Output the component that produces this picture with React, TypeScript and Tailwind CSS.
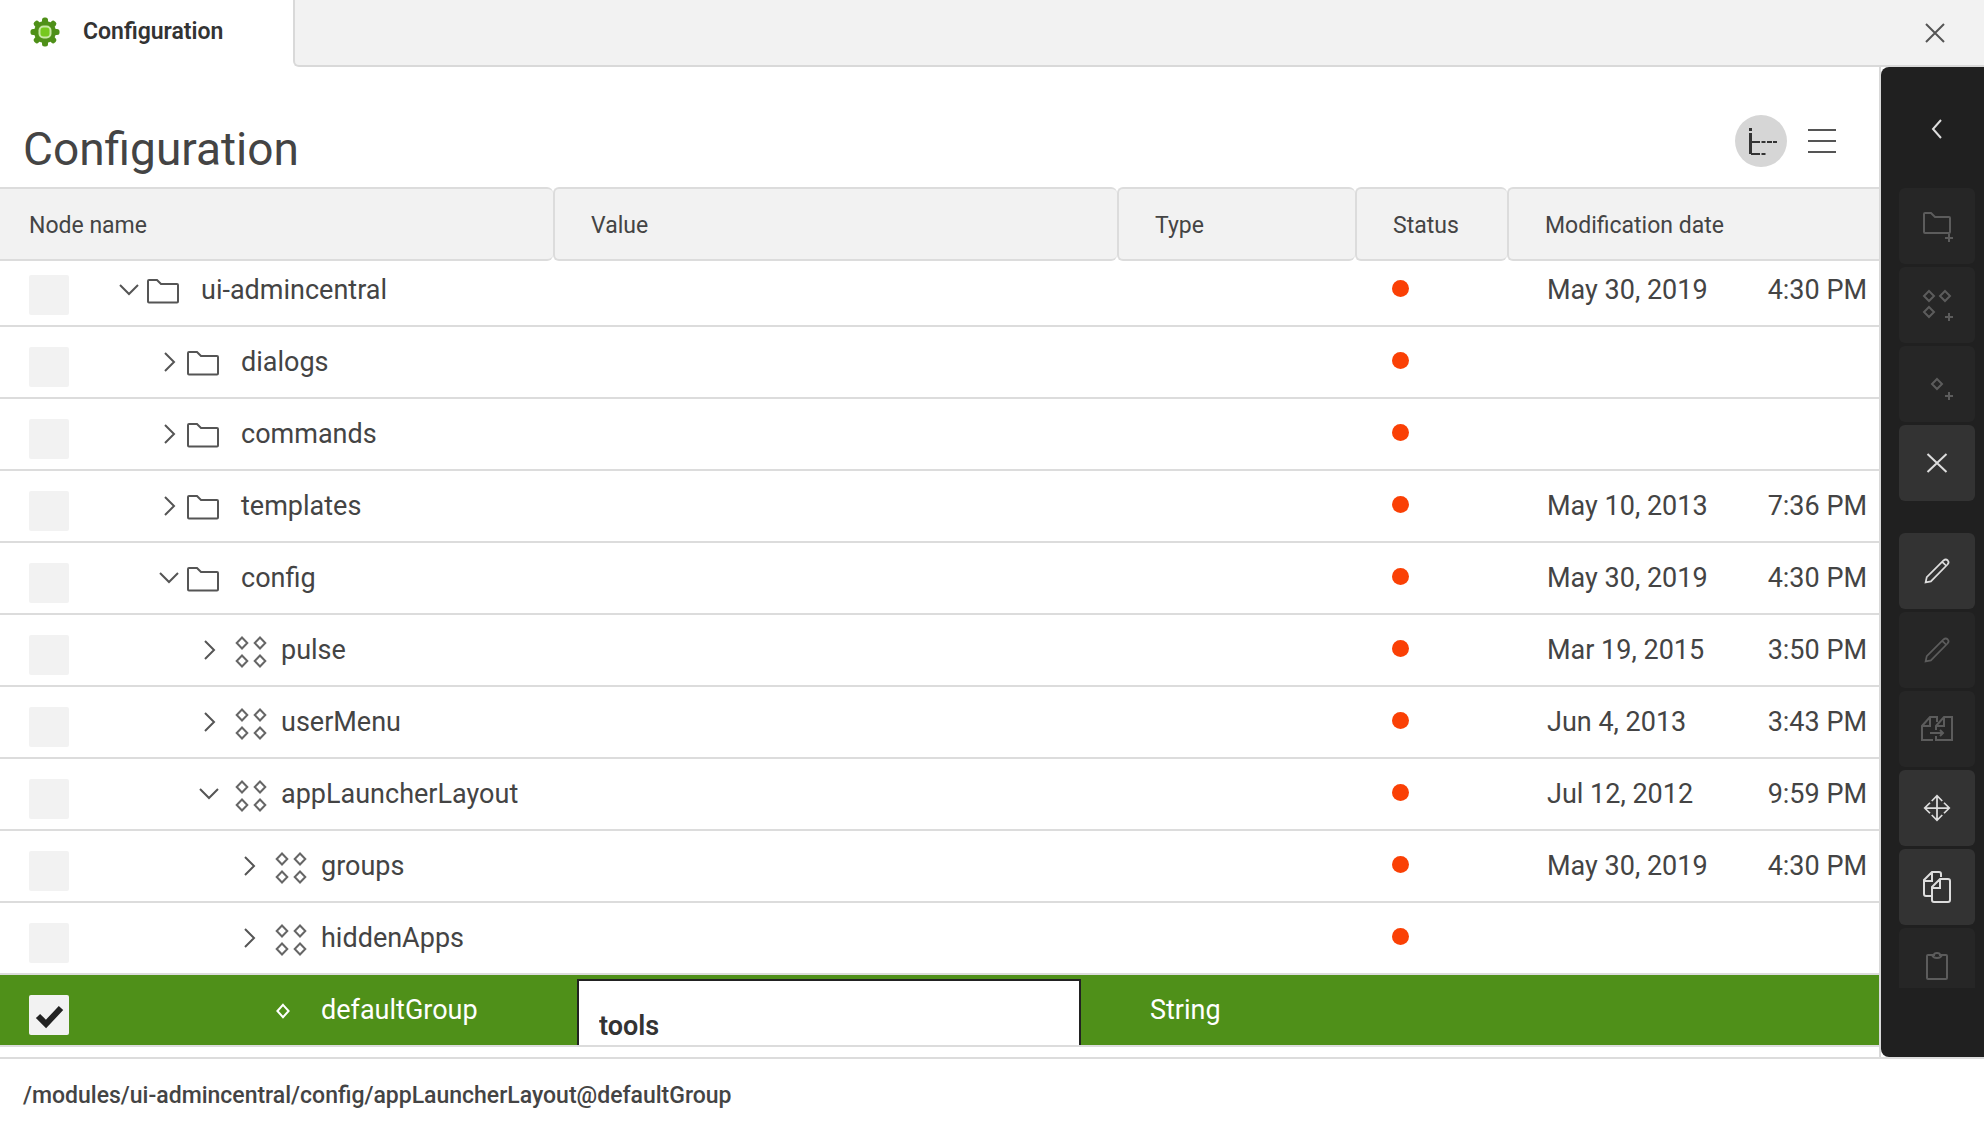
import React, { FC, ReactNode, useState } from 'react'

type NodeKind = 'folder' | 'content' | 'property'

interface ConfigNode {
  name: string,
  level: number,
  kind: NodeKind,
  open?: boolean,
  date?: string,
  time?: string,
  value?: string,
  type?: string
}

interface Action {
  label: string,
  icon: ReactNode,
  enabled?: boolean
}

const nodes: ConfigNode[] = [
  { name: 'ui-admincentral', level: 0, kind: 'folder', open: true, date: 'May 30, 2019', time: '4:30 PM' },
  { name: 'dialogs', level: 1, kind: 'folder' },
  { name: 'commands', level: 1, kind: 'folder' },
  { name: 'templates', level: 1, kind: 'folder', date: 'May 10, 2013', time: '7:36 PM' },
  { name: 'config', level: 1, kind: 'folder', open: true, date: 'May 30, 2019', time: '4:30 PM' },
  { name: 'pulse', level: 2, kind: 'content', date: 'Mar 19, 2015', time: '3:50 PM' },
  { name: 'userMenu', level: 2, kind: 'content', date: 'Jun 4, 2013', time: '3:43 PM' },
  { name: 'appLauncherLayout', level: 2, kind: 'content', open: true, date: 'Jul 12, 2012', time: '9:59 PM' },
  { name: 'groups', level: 3, kind: 'content', date: 'May 30, 2019', time: '4:30 PM' },
  { name: 'hiddenApps', level: 3, kind: 'content' },
  { name: 'defaultGroup', level: 3, kind: 'property', value: 'tools', type: 'String' },
]

const indents = ['pl-[50px]', 'pl-[90px]', 'pl-[130px]', 'pl-[170px]']

const iconSlots = {
  folder: 'pl-2 pt-0.5 text-[#555]',
  content: 'pl-4 pt-1 text-[#666]',
  property: 'pl-4 pt-0.5',
}

const Svg: FC<{ children: ReactNode, className?: string }> = ({ children, className = 'size-8' }) => (
  <svg viewBox="0 0 32 32" className={className} fill="none" stroke="currentColor" strokeWidth="2" aria-hidden="true">
    {children}
  </svg>
)

const GearIcon = () => (
  <svg viewBox="0 0 30 30" className="size-[30px]" aria-hidden="true">
    {[0, 45, 90, 135].map((angle) => (
      <rect key={angle} x="12" y="0.5" width="6" height="29" rx="2.5" fill="#4f9019" transform={`rotate(${angle} 15 15)`} />
    ))}
    <circle cx="15" cy="15" r="11" fill="#4f9019" />
    <rect x="8.5" y="8.5" width="13" height="13" rx="5" fill="#c9e8a5" />
    <rect x="10.500" y="10.500" width="9" height="9" rx="3" fill="#76c81e" />
  </svg>
)

const FolderIcon = () => (
  <Svg>
    <path d="M1 26.5V6Q1 5 2 5H10L14 9H30Q31 9 31 10V26.5Q31 27.5 30 27.5H2Q1 27.5 1 26.5Z" />
  </Svg>
)

const ContentIcon = () => (
  <Svg>
    <path d="M7 1.500L12.300 7L7 12.500L1.700 7Z M25 1.500L30.300 7L25 12.500L19.700 7Z M7 19.500L12.300 25L7 30.500L1.700 25Z M25 19.500L30.300 25L25 30.500L19.700 25Z" />
  </Svg>
)

const PropertyIcon = () => (
  <Svg>
    <path d="M8 9.800L13.600 16L8 22.200L2.400 16Z" />
  </Svg>
)

const plus = <path d="M28 24V32 M24 28H32" />

const pencil = (
  <Svg className="size-7">
    <path d="M3 29L4.300 23L23.500 4Q26 1.800 28.300 4Q30.300 6 28 8.600L9 27.800Z M22 5.500L26.500 10" />
  </Svg>
)

const actionGroups: Action[][] = [
  [
    {
      label: 'Add folder',
      icon: <Svg><path d="M3 22V4Q3 3 4 3H10L14 7H28Q29 7 29 8V22Q29 23 28 23H4Q3 23 3 22Z" />{plus}</Svg>
    },
    {
      label: 'Add content node',
      icon: <Svg><path d="M8 2L13 7L8 12L3 7Z M24 2L29 7L24 12L19 7Z M8 18L13 23L8 28L3 23Z" />{plus}</Svg>
    },
    { label: 'Add property', icon: <Svg><path d="M16 11L21 16L16 21L11 16Z" />{plus}</Svg> },
    { label: 'Delete', enabled: true, icon: <Svg><path d="M6.500 7L25.500 25 M25.500 7L6.500 25" /></Svg> },
  ],
  [
    { label: 'Edit property', enabled: true, icon: pencil },
    { label: 'Rename item', icon: pencil },
    {
      label: 'Duplicate item',
      icon: <Svg><path d="M12 27H1V13L9 4H16V9 M1 13H9V4 M15 17V13L23 4H31V27H15V23 M15 13H23V4 M9 20H22 M19 17L22 20L19 23" /></Svg>
    },
    {
      label: 'Move item',
      enabled: true,
      icon: <Svg className="size-7"><path d="M16 2V30 M2 16H30 M10 8L16 2L22 8 M10 24L16 30L22 24 M8 10L2 16L8 22 M24 10L30 16L24 22" /></Svg>
    },
    {
      label: 'Copy item',
      enabled: true,
      icon: <Svg><path d="M10 25H5Q3 25 3 23V9L11 1H18Q20 1 20 3V6 M3 10H11V1 M11 16L19 8H27Q29 8 29 10V29Q29 31 27 31H13Q11 31 11 29Z M11 17H19V8" /></Svg>
    },
    {
      label: 'Paste item',
      icon: <Svg><path d="M12 5H7Q6 5 6 6V28Q6 29 7 29H25Q26 29 26 28V6Q26 5 25 5H20 M11 5H13Q13 3 16 3Q19 3 19 5H21Q20 8 16 8Q12 8 11 5Z" /></Svg>
    },
  ],
]

const NodeIcon: FC<{ kind: NodeKind }> = ({ kind }) => {
  if (kind === 'folder') return <FolderIcon />
  if (kind === 'content') return <ContentIcon />
  return <PropertyIcon />
}

const Chevron: FC<{ open?: boolean }> = ({ open }) => (
  <svg viewBox="0 0 20 20" className="size-5" fill="none" stroke="currentColor" strokeWidth="2" aria-hidden="true">
    <path d={open ? 'M1 5L10 14L19 5' : 'M6 1L15 10L6 19'} />
  </svg>
)

const columns = ['Node name', 'Value', 'Type', 'Status', 'Modification date']

const NodeRow: FC<{ node: ConfigNode, first: boolean, checked: boolean, onCheck: () => void }> = ({ node, first, checked, onCheck }) => {
  const [value, setValue] = useState<string>(node.value ?? '')
  const cell = 'p-0 align-bottom'

  return (
    <tr className={`border-b-2 border-[#dcdcdc] ${first ? 'h-[65px]' : 'h-[72px]'} ${checked ? 'bg-[#4f9019] text-white' : ''}`}>
      <td className={cell}>
        <div className="mb-1.5 flex h-[58px] items-center pl-[29px]">
          <input
            type="checkbox"
            aria-label={`Select ${node.name}`}
            checked={checked}
            onChange={onCheck}
            className="peer mb-1 size-10 shrink-0 appearance-none self-end rounded-xs bg-[#f2f2f2]"
          />
          <svg viewBox="0 0 40 40" className="pointer-events-none invisible -ml-10 mb-1 size-10 shrink-0 self-end text-[#222] peer-checked:visible" fill="none" stroke="currentColor" strokeWidth="6" aria-hidden="true">
            <path d="M9 21L17 29L32 13" />
          </svg>
          <div className={`flex items-center ${indents[node.level]}`}>
            {node.kind === 'property' ? (
              <span className="w-5" />
            ) : (
              <button type="button" aria-label={`Toggle ${node.name}`} aria-expanded={!!node.open} className="text-[#555]">
                <Chevron open={node.open} />
              </button>
            )}
            <span className={`flex w-[62px] ${iconSlots[node.kind]}`}>
              <NodeIcon kind={node.kind} />
            </span>
            <span>{node.name}</span>
          </div>
        </div>
      </td>
      <td className={cell}>
        {node.value && (
          <div className="h-[66px] overflow-hidden pr-9 pl-6">
            <input
              type="text"
              aria-label={`Value of ${node.name}`}
              value={value}
              onChange={(e) => setValue(e.target.value)}
              className="h-[94px] w-full border-2 border-[#222] bg-white px-5 text-[27px] font-semibold text-[#333]"
            />
          </div>
        )}
      </td>
      <td className={cell}>
        <div className="mb-1.5 flex h-[58px] items-center pl-[33px]">{node.type}</div>
      </td>
      <td className={cell}>
        {!checked && (
          <div className="mb-1.5 flex h-[58px] items-center pl-[37px]">
            <span className="mb-1 size-[17px] rounded-full bg-[#fa4005]" role="img" aria-label="Unpublished" />
          </div>
        )}
      </td>
      <td className={cell}>
        <div className="mb-1.5 flex h-[58px] items-center justify-between pr-3 pl-10">
          <span>{node.date}</span>
          <span>{node.time}</span>
        </div>
      </td>
    </tr>
  )
}

const ActionBar = () => (
  <aside className="flex w-[103px] shrink-0 flex-col items-center rounded-l-lg bg-[#202020] pr-[9px] pl-[18px]">
    <button type="button" aria-label="Collapse action bar" className="mt-[46px] mb-[43px] text-[#ddd]">
      <svg viewBox="0 0 32 32" className="size-8" fill="none" stroke="currentColor" strokeWidth="2" aria-hidden="true">
        <path d="M20 7L12 16L20 25" />
      </svg>
    </button>
    <div className="flex flex-col gap-8">
      {actionGroups.map((group, i) => (
        <div key={i} className="flex flex-col gap-[3px]">
          {group.map((action) => (
            <button
              key={action.label}
              type="button"
              aria-label={action.label}
              disabled={!action.enabled}
              className={`flex w-[76px] items-center justify-center rounded-md ${action.label === 'Paste item' ? 'h-[60px] rounded-b-none pt-4' : 'h-[76px]'} ${action.enabled ? 'bg-[#333] text-[#ddd]' : 'bg-[#262626] text-[#5c5c5c]'}`}
            >
              {action.icon}
            </button>
          ))}
        </div>
      ))}
    </div>
  </aside>
)

const App = () => {
  const [selected, setSelected] = useState<string>('defaultGroup')

  return (
    <div className="flex min-h-screen flex-col bg-white font-[Roboto,'Liberation_Sans',sans-serif] text-[#444]">
      <header className="flex h-[67px]">
        <div className="flex w-[293px] shrink-0 items-center gap-[23px] pb-1 pl-[30px]">
          <GearIcon />
          <span className="pt-0.5 text-[23px] font-semibold text-[#333]">Configuration</span>
        </div>
        <div className="flex grow items-center justify-end rounded-bl-md border-b-2 border-l-2 border-[#d9d9d9] bg-[#f2f2f2] pr-[33px]">
          <button type="button" aria-label="Close" className="text-[#555]">
            <svg viewBox="0 0 32 32" className="size-8" fill="none" stroke="currentColor" strokeWidth="2" aria-hidden="true">
              <path d="M7 7L25 25 M25 7L7 25" />
            </svg>
          </button>
        </div>
      </header>

      <div className="flex border-b-2 border-[#dcdcdc]">
        <main className="grow border-r-2 border-[#d9d9d9] pb-2.5">
          <div className="flex h-[120px] items-start justify-between pr-[31px] pl-[23px]">
            <h1 className="mt-[52px] text-[46px] leading-[60px]">Configuration</h1>
            <div className="mt-12 flex gap-[9px]">
              <button type="button" aria-label="Tree view" className="flex size-[52px] items-center justify-center rounded-full bg-[#d6d6d6] text-[#333]">
                <svg viewBox="0 0 32 32" className="size-8" fill="none" stroke="currentColor" aria-hidden="true">
                  <path d="M5.500 3V6 M5.500 8V29" strokeWidth="3" />
                  <path d="M6 17H15 M16.500 17H20.500 M22 17H27 M28 17H32 M6 29H15 M16.500 29H20.500" strokeWidth="2" />
                </svg>
              </button>
              <button type="button" aria-label="List view" className="flex size-[52px] items-center justify-center text-[#555]">
                <svg viewBox="0 0 32 32" className="size-8" fill="none" stroke="currentColor" strokeWidth="2" aria-hidden="true">
                  <path d="M2 5H30 M2 16H30 M2 27H30" />
                </svg>
              </button>
            </div>
          </div>

          <table className="w-full table-fixed border-collapse text-[27px] leading-8">
            <colgroup>
              <col className="w-[553px]" />
              <col />
              <col className="w-[238px]" />
              <col className="w-[152px]" />
              <col className="w-[372px]" />
            </colgroup>
            <thead>
              <tr className="h-[74px]">
                {columns.map((column, i) => (
                  <th key={column} scope="col" className="p-0 text-left text-[23px] font-normal">
                    <div className={`flex h-[74px] items-center border-y-2 border-[#dcdcdc] bg-[#f2f2f2] pt-[3px] ${i === 0 ? 'pl-[29px]' : 'rounded-l-md border-l-2 pl-9'} ${i === 4 ? '' : 'rounded-r-md'}`}>
                      {column}
                    </div>
                  </th>
                ))}
              </tr>
            </thead>
            <tbody>
              {nodes.map((node, i) => (
                <NodeRow
                  key={node.name}
                  node={node}
                  first={i === 0}
                  checked={selected === node.name}
                  onCheck={() => setSelected(selected === node.name ? '' : node.name)}
                />
              ))}
            </tbody>
          </table>
        </main>
        <ActionBar />
      </div>

      <footer className="flex grow items-center pt-3 pl-[23px] text-[23px] font-medium">
        /modules/ui-admincentral/config/appLauncherLayout@defaultGroup
      </footer>
    </div>
  )
}

export default App
